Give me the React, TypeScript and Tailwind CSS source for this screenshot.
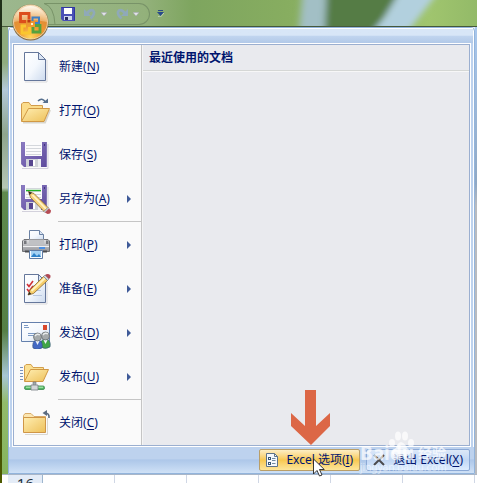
import type { ReactNode } from "react";

type MenuEntry = {
  label: string;
  accessKey: string;
  icon: ReactNode;
  submenu?: boolean;
  divider?: boolean;
};

function Icon({ children }: { children: ReactNode }) {
  return (
    <svg viewBox="0 0 32 32" className="size-8 shrink-0" aria-hidden="true">
      {children}
    </svg>
  );
}

function Gradients() {
  return (
    <svg className="absolute size-0" aria-hidden="true">
      <defs>
        <linearGradient id="paper" x1="0" y1="0" x2="1" y2="1">
          <stop offset="0" stopColor="#ffffff" />
          <stop offset="0.5" stopColor="#f4f8fd" />
          <stop offset="1" stopColor="#ccdaee" />
        </linearGradient>
        <linearGradient id="folder" x1="0" y1="0" x2="1" y2="1">
          <stop offset="0" stopColor="#ffeeb2" />
          <stop offset="1" stopColor="#edc059" />
        </linearGradient>
        <linearGradient id="disk" x1="0" y1="0" x2="1" y2="1">
          <stop offset="0" stopColor="#8c7cc4" />
          <stop offset="1" stopColor="#5d4a9c" />
        </linearGradient>
        <linearGradient id="metal" x1="0" y1="0" x2="0" y2="1">
          <stop offset="0" stopColor="#e0e0e2" />
          <stop offset="1" stopColor="#94959a" />
        </linearGradient>
        <radialGradient id="orb" cx="0.5" cy="0.95" r="0.95">
          <stop offset="0" stopColor="#ffd75c" />
          <stop offset="0.35" stopColor="#ef9a30" />
          <stop offset="0.65" stopColor="#e28e35" />
          <stop offset="1" stopColor="#f6dcb6" />
        </radialGradient>
        <linearGradient id="gloss" x1="0" y1="0" x2="0" y2="1">
          <stop offset="0" stopColor="#fffaf0" stopOpacity="0.95" />
          <stop offset="1" stopColor="#f6cf9a" stopOpacity="0.45" />
        </linearGradient>
      </defs>
    </svg>
  );
}

function Page() {
  return (
    <>
      <path d="M5 31H27V9" fill="none" stroke="#d9d9dc" />
      <path d="M4.5 1.5H18.5L25.5 8.5V29.5H4.5Z" fill="url(#paper)" stroke="#65779b" />
      <path d="M18.5 1.5V8.5H25.5Z" fill="#dce6f4" stroke="#65779b" />
    </>
  );
}

function Disk() {
  return (
    <>
      <path d="M2 29.5H28V5" fill="none" stroke="#d3d1dc" />
      <path d="M1 3H27V28H4L1 25Z" fill="url(#disk)" />
      <path d="M1.5 3V25M26.5 3V28" stroke="#8275b5" fill="none" />
      <path d="M5 3H22V17H5Z" fill="#fbfbfc" />
      <path d="M6 6.5H21M6 9.5H21M6 12.5H21M6 15.5H21" stroke="#d4d7dc" />
      <path d="M24 5h1v2h-1z" fill="#3f3280" />
      <path d="M6 20H21V28H6Z" fill="#cfd2d8" />
      <path d="M9 21H13V27H9Z" fill="#574690" />
      <path d="M13 21H15V27H13Z" fill="#fff" />
      <path d="M18 20H21V28H18Z" fill="#eceef2" />
    </>
  );
}

function Person({ body }: { body: string }) {
  return (
    <>
      <path d="M-4 13C-5 8-3 5 0 5C4 5 6 8 5 13Q0 16-4 13Z" fill={body} stroke="#35547d" strokeWidth="0.6" />
      <path d="M-1.5 6L0.5 10L2.5 6Z" fill="#eef4fa" />
      <circle cx="0.5" cy="2" r="4" fill="#a4a9ab" stroke="#6a7174" strokeWidth="0.8" />
      <path d="M-2 1Q0-2 3 0" stroke="#e8ebec" strokeWidth="1.5" fill="none" />
    </>
  );
}

const newIcon = (
  <Icon>
    <Page />
  </Icon>
);

const openIcon = (
  <Icon>
    <path d="M3 27.5H25L30 15" fill="none" stroke="#d8d5cc" strokeWidth="2" />
    <path d="M1.5 26V9L3 7.5H9L11 10.5H22.5V15" fill="#fbdc8b" stroke="#d19b4b" />
    <path d="M1.5 26.5L8.5 13.5H29.5L24 26.5Z" fill="url(#folder)" stroke="#d19843" />
    <path d="M18 6Q22 2 25.5 7" fill="none" stroke="#566f8d" strokeWidth="1.6" />
    <path d="M22.5 8H28V3.5Z" fill="#566f8d" />
  </Icon>
);

const saveIcon = (
  <Icon>
    <Disk />
  </Icon>
);

const saveAsIcon = (
  <Icon>
    <g transform="translate(0 -1)">
      <Disk />
    </g>
    <path d="M6 7.5H21" stroke="#1fb026" strokeWidth="1.4" />
    <path d="M8.500 8.500L10.500 14.500L24 28.500L28 24.500L14 10.500Z" fill="#f7d37c" stroke="#8a6834" strokeWidth="0.8" />
    <path d="M12.500 12L26 26" stroke="#fff3c8" strokeWidth="1.8" />
    <path d="M8.500 8.500L9.700 12L12 9.800Z" fill="#2d2821" />
    <path d="M24 28.500L28 24.500L29 25.500L25 29.500Z" fill="#dfe3e6" stroke="#747b82" strokeWidth="0.6" />
    <path d="M25 29.500L29 25.500L31 27.500Q31 31 27.500 31Z" fill="#b54c54" />
  </Icon>
);

const printIcon = (
  <Icon>
    <path d="M9.5 11V1.5H19.5L23.5 5.5V11Z" fill="url(#paper)" stroke="#6b81a3" />
    <path d="M19.5 1.5V5.5H23.5" fill="#dce6f4" stroke="#6b81a3" />
    <path d="M4 10.5H28L29.5 12V22.5H2.5V12Z" fill="url(#metal)" stroke="#717276" />
    <path d="M4 11.5H6.5V15H4ZM26 11.5H28.5V15H26Z" fill="#77787d" />
    <path d="M9 10.5H24V16H9Z" fill="#c0c1c4" />
    <path d="M3 17.5H29" stroke="#efeff0" />
    <path d="M19 18H25V20H19Z" fill="#4b8fe3" />
    <path d="M9.5 21.5H22.5V29.5H9.5Z" fill="#f6faff" stroke="#5f7ba3" />
    <path d="M11 22H21V28H11Z" fill="#a4d1f3" />
    <path d="M11 28L14 24L17 27L19 25L21 28Z" fill="#2e82c9" />
    <path d="M5 22.5H9M23 22.5H27" stroke="#4b4c50" strokeWidth="2" />
  </Icon>
);

const prepareIcon = (
  <Icon>
    <Page />
    <path d="M13 12.5H21M13 17.5H21M13 22.5H22" stroke="#b9c8df" />
    <path d="M7 11L9 13.5L13 8M7 16L9 18.5L13 13" stroke="#cf3138" strokeWidth="1.6" fill="none" />
    <path d="M8 22L10 17L23.500 3.500L27.500 7.500L13.500 20.500Z" fill="#f6ce6b" stroke="#8a6830" strokeWidth="0.8" />
    <path d="M11.500 18L25 5" stroke="#fff2c0" strokeWidth="1.8" />
    <path d="M8 22L9.300 18.800L11.200 21Z" fill="#2d2821" />
    <path d="M23.500 3.500L25 2L29 6L27.500 7.500Z" fill="#cfd6dc" stroke="#6d7680" strokeWidth="0.6" />
    <path d="M25 2Q28 0 30.500 2.500Q31 4.500 29 6Z" fill="#b04a55" />
  </Icon>
);

const sendIcon = (
  <Icon>
    <path d="M1.500 5.500H29.500V24.500H1.500Z" fill="url(#paper)" stroke="#6480ad" />
    <path d="M4 8.500H8M4 10.500H9M8 16.500H16M8 18.500H14" stroke="#7c9ac5" />
    <path d="M23 8H27V13H23Z" fill="#d9472b" />
    <g transform="translate(25 17)">
      <Person body="#40a546" />
    </g>
    <g transform="translate(17 18)">
      <Person body="#4469c3" />
    </g>
  </Icon>
);

const publishIcon = (
  <Icon>
    <path d="M0 6.500H3M0 9.500H3M0 12.500H3M0 15.500H3M0 18.500H3" stroke="#7892bd" />
    <path d="M4.500 20V5L6 3.500H11L13 6.500H23.500V10" fill="#fbe092" stroke="#d3a04e" />
    <path d="M4.500 20.500L10.500 8.500H28.500L23 20.500Z" fill="url(#folder)" stroke="#d19843" />
    <path d="M13 21H16V25H13Z" fill="#a4a9ad" stroke="#70767c" strokeWidth="0.6" />
    <rect x="4.500" y="25" width="20" height="3.500" rx="1.500" fill="#55b963" stroke="#38864a" strokeWidth="0.8" />
    <path d="M6 26.200H23" stroke="#b9efbe" />
    <path d="M11 24H18V29H11Z" fill="#d3d6d9" stroke="#777e84" strokeWidth="0.8" />
  </Icon>
);

const closeIcon = (
  <Icon>
    <path d="M5 27.500H27.500V11" fill="none" stroke="#dad8d2" />
    <path d="M3.500 25V8.500L5 6.500H11L14 9.500H25.500V12" fill="#fbe6b0" stroke="#d9ab6a" />
    <path d="M3.500 10.500H25.500V25.500H3.500Z" fill="url(#folder)" stroke="#cf9647" />
    <path d="M29 11Q29.500 6 25 6" fill="none" stroke="#5a6b80" strokeWidth="1.600" />
    <path d="M22.500 6L27 3V9Z" fill="#5a6b80" />
  </Icon>
);

const entries: MenuEntry[] = [
  { label: "新建", accessKey: "N", icon: newIcon },
  { label: "打开", accessKey: "O", icon: openIcon },
  { label: "保存", accessKey: "S", icon: saveIcon },
  { label: "另存为", accessKey: "A", icon: saveAsIcon, submenu: true, divider: true },
  { label: "打印", accessKey: "P", icon: printIcon, submenu: true },
  { label: "准备", accessKey: "E", icon: prepareIcon, submenu: true },
  { label: "发送", accessKey: "D", icon: sendIcon, submenu: true },
  { label: "发布", accessKey: "U", icon: publishIcon, submenu: true, divider: true },
  { label: "关闭", accessKey: "C", icon: closeIcon },
];

function Label({ text, accessKey }: { text: string; accessKey: string }) {
  return (
    <span className="whitespace-nowrap">
      {text}(<u className="underline-offset-2">{accessKey}</u>)
    </span>
  );
}

function Wallpaper() {
  return (
    <svg
      viewBox="0 0 477 27"
      preserveAspectRatio="none"
      className="absolute inset-0 h-full w-full"
      aria-hidden="true"
    >
      <defs>
        <linearGradient id="grass">
          <stop offset="0" stopColor="#9cb78e" />
          <stop offset="0.3" stopColor="#93b17b" />
          <stop offset="0.4" stopColor="#7ea55f" />
          <stop offset="0.6" stopColor="#87ad60" />
          <stop offset="0.9" stopColor="#a0c56e" />
          <stop offset="1" stopColor="#93ba68" />
        </linearGradient>
        <filter id="soft">
          <feGaussianBlur stdDeviation="4 2" />
        </filter>
      </defs>
      <rect width="477" height="27" fill="url(#grass)" />
      <g filter="url(#soft)">
        <path d="M302 -8H326V35H298Z" fill="#a2bfc5" />
        <path d="M326 -8H401L372 35H324Z" fill="#557c45" />
        <path d="M399 -8H438L406 35H370L384 18Z" fill="#b2d0de" />
      </g>
    </svg>
  );
}

function OfficeButton() {
  return (
    <button type="button" aria-label="Office" className="absolute top-1 left-2.5 z-20 size-[37px]">
      <svg viewBox="0 0 37 37" className="size-full">
        <circle cx="18.500" cy="18.500" r="18" fill="#8a6c3f" />
        <circle cx="18.500" cy="18" r="17" fill="url(#orb)" stroke="#f7e2bd" strokeWidth="0.800" />
        <path d="M2 18A16.500 16 0 0 1 35 18Q18 14 2 18Z" fill="url(#gloss)" />
        <g fill="none" strokeWidth="2.800">
          <path d="M14 17.500H8.500V9.500H17V15" stroke="#dc4e1b" />
          <path d="M20.500 17V13.500H27V19H23" stroke="#3f7fc4" strokeWidth="2" />
          <path d="M17.500 23V29H10V22H14" stroke="#fac62e" />
          <path d="M21 23V28H28V21.500H23" stroke="#56a23d" />
        </g>
        <path d="M15.500 15.500H18.500V18.500H15.500Z" fill="#b93a14" />
        <path d="M19 19H21V21H19Z" fill="#fff2cb" />
      </svg>
    </button>
  );
}

function UndoGlyph() {
  return (
    <svg viewBox="0 0 14 14" className="size-[14px]" aria-hidden="true">
      <path d="M4 6.500Q7 2 10 3.500Q13 6.500 7.500 11.500" fill="none" stroke="#8fa9b8" strokeWidth="2.600" />
      <path d="M1 2V9H8Z" fill="#8fa9b8" />
    </svg>
  );
}

function SmallCaret() {
  return (
    <svg viewBox="0 0 6 4" className="h-1 w-1.5" aria-hidden="true">
      <path d="M0 0.500H6L3 4Z" fill="#e3e4e8" stroke="#a5a5b4" strokeWidth="0.500" />
    </svg>
  );
}

function TitleBar() {
  return (
    <header className="relative h-[27px] shrink-0 border-b border-[#45583a]">
      <Wallpaper />
      <OfficeButton />
      <div className="relative flex items-start gap-[7px] pt-[3px] pl-[42px]">
        <div className="flex h-[22px] items-center gap-1 rounded-r-full border border-l-0 border-[#789368] pr-[10px]">
          {/* left end of the toolbar bends round the Office button */}
          <svg viewBox="0 0 12 22" className="h-[22px] w-3" aria-hidden="true">
            <path d="M0 0.500Q10 3 11 21.500" fill="none" stroke="#789368" />
          </svg>
          <button type="button" aria-label="保存" className="ml-px">
            <svg viewBox="0 0 14 14" className="size-[14px]">
              <path d="M0 0H14V14H2L0 12Z" fill="#4a50b6" />
              <path d="M3 1H11V7H3Z" fill="#fff" />
              <path d="M3 9H11V13H3Z" fill="#cdd6ee" />
              <path d="M4 10H7V13H4Z" fill="#282b63" />
              <path d="M0.500 0.500H13.500V13.500" fill="none" stroke="#3036a0" />
            </svg>
          </button>
          <button type="button" aria-label="撤消" className="ml-1 flex items-center gap-1">
            <UndoGlyph />
            <SmallCaret />
          </button>
          <button type="button" aria-label="恢复" className="ml-1 flex items-center gap-1">
            <span className="-scale-x-100">
              <UndoGlyph />
            </span>
            <SmallCaret />
          </button>
        </div>
        <button type="button" aria-label="自定义快速访问工具栏" className="mt-[7px]">
          <svg viewBox="0 0 7 7" className="size-[7px]">
            <path d="M1 0.500H6" stroke="#2c4b86" />
            <path d="M0 2H7L3.500 6Z" fill="#274a8c" />
            <path d="M1 6.500L3.500 7L7 3" stroke="#e6eedd" strokeWidth="0.600" fill="none" />
          </svg>
        </button>
      </div>
    </header>
  );
}

function MenuItem({ entry }: { entry: MenuEntry }) {
  return (
    <li>
      <button type="button" className="flex h-11 w-full items-center gap-[7px] pr-[10px] pl-1.5 text-left">
        {entry.icon}
        <Label text={entry.label} accessKey={entry.accessKey} />
        {entry.submenu && (
          <svg viewBox="0 0 4 8" className="ml-auto h-2 w-1" aria-hidden="true">
            <path d="M0 0L4 4L0 8Z" fill="#3f5a98" />
          </svg>
        )}
      </button>
      {entry.divider && <div className="ml-11 h-0.5 border-t border-[#c5c5c5]" />}
    </li>
  );
}

function Watermark() {
  return (
    <div className="pointer-events-none absolute right-[26px] bottom-0 z-10 w-[86px] text-white/70" aria-hidden="true">
      <div className="relative flex items-end justify-between leading-4">
        <span className="text-[19px] font-bold">Baidu</span>
        <svg viewBox="0 0 26 26" className="absolute bottom-1 left-7 size-[26px]" fill="currentColor">
          <ellipse cx="4" cy="12" rx="3" ry="4" />
          <ellipse cx="10" cy="5" rx="3" ry="4.500" />
          <ellipse cx="17" cy="5" rx="3" ry="4.500" />
          <ellipse cx="23" cy="12" rx="3" ry="4" />
          <path d="M13 11Q17 12 19 17Q24 20 21 24Q18 27 13 25Q8 27 5 24Q2 20 8 17Q9 12 13 11Z" />
        </svg>
        <span className="text-[14px] font-bold whitespace-nowrap">经验</span>
      </div>
      <div className="text-[10px] leading-3 text-white/50">jingyan.baidu.com</div>
    </div>
  );
}

function MenuFooter() {
  return (
    <footer className="relative flex justify-end gap-1.5 py-0.5 pr-0.5">
      <div className="relative">
        <button
          type="button"
          className="flex h-[22px] items-center gap-2 rounded-[2px] border border-[#b99e68] bg-linear-to-b from-[#fdeec4] via-[#f8c84e] via-50% to-[#fde69a] px-1.5"
        >
          <svg viewBox="0 0 12 14" className="h-[14px] w-3" aria-hidden="true">
            <path d="M0.500 0.500H8.500L11.500 3.500V13.500H0.500Z" fill="#f4f8fc" stroke="#5d7389" />
            <path d="M8.500 0.500V3.500H11.500" fill="none" stroke="#5d7389" />
            <path d="M2 4H5V7H2ZM2 9H5V12H2Z" fill="#395775" />
            <path d="M3 5H4V6H3ZM3 10H4V11H3Z" fill="#fff" />
            <path d="M6 5.500H9.500M6 7.500H9.500M6 10.500H9.500" stroke="#708aa2" />
          </svg>
          <Label text="Excel 选项" accessKey="I" />
        </button>
        {/* callout arrow */}
        <svg
          viewBox="0 0 39 55"
          className="pointer-events-none absolute bottom-full left-8 mb-1 h-[55px] w-[39px]"
          aria-hidden="true"
        >
          <path d="M14 0H25V36L39 23V36L20 55L0 36V23L14 36Z" fill="#dc6746" />
        </svg>
        {/* mouse pointer */}
        <svg
          viewBox="0 0 12 19"
          className="pointer-events-none absolute top-[9px] left-[54px] z-20 h-[19px] w-3"
          aria-hidden="true"
        >
          <path
            d="M0.500 1V16L4 12.500L6.500 18L9 17L6.500 11.500H11.300Z"
            fill="#fff"
            stroke="#222"
            strokeWidth="0.900"
          />
        </svg>
      </div>
      <button
        type="button"
        className="flex h-[22px] items-center gap-2 rounded-[2px] border border-[#8ba9d6] bg-linear-to-b from-[#dce8f8] via-[#c2d7f4] via-50% to-[#dcecff] px-1.5"
      >
        <svg viewBox="0 0 12 12" className="size-3" aria-hidden="true">
          <path d="M1 1L11 11M11 1L1 11" stroke="#4b4b4f" strokeWidth="2" />
        </svg>
        <Label text="退出 Excel" accessKey="X" />
      </button>
      <Watermark />
    </footer>
  );
}

export default function App() {
  return (
    <div className="flex h-screen overflow-hidden bg-[#e6ecf5] font-['Noto_Sans','Noto_Sans_CJK_SC',sans-serif] text-[12px] leading-4 text-[#00156e]">
      <Gradients />
      <div className="w-0.5 shrink-0 bg-linear-to-b from-[#20301a] via-[#101a04] to-[#4d5a00]" />
      <div className="relative flex min-w-0 flex-1 flex-col">
        <TitleBar />
        <div className="flex">
          <div className="w-1.5 shrink-0 bg-[linear-gradient(to_bottom,#8fac7e_8%,#b3c9d8_14%,#8ea58c_24%,#b5c6b4_36%,#5f8a4e_37%,#557f45_68%,#a7c6d4_78%,#92bb6a_84%,#86b45e)]" />
          <main className="min-w-0 flex-1 rounded-t border border-[#92b4dc] bg-[#bdd2ee] shadow-[inset_1px_1px_0_#fff,inset_-1px_0_0_#fff]">
            <div className="mx-px h-[15px] border-t border-white bg-linear-to-b from-[#d8e6f7] from-45% via-[#c1d5ef] via-50% to-[#b2c9e8]" />
            <div className="mx-[3px] border border-white">
              <div className="flex border border-[#9bafd0]">
                <nav className="w-[128px] shrink-0 border-r border-[#c5c5c5] bg-[#fafafa]">
                  <ul>
                    {entries.map((entry) => (
                      <MenuItem key={entry.accessKey} entry={entry} />
                    ))}
                  </ul>
                </nav>
                <section className="flex-1 border-l border-[#f5f5f5] bg-[#e9eaee]">
                  <h2 className="border-b border-[#d5d7d5] px-1.5 pt-[5px] pb-1 font-bold shadow-[0_1px_0_#f7f7f7]">
                    最近使用的文档
                  </h2>
                </section>
              </div>
            </div>
            <div className="bg-linear-to-b from-[#bdd2ee] from-45% via-[#adc7e9] via-50% to-[#cfe1f6] px-0.5">
              <MenuFooter />
            </div>
          </main>
          <div className="w-0.5 shrink-0 bg-linear-to-b from-[#aac8ed] via-[#8fa8c4] via-35% to-[#b9bbbf] to-40%" />
        </div>
        <div className="flex flex-1 items-start overflow-hidden border-t border-[#a9b6c8] bg-white pl-1.5">
          <span className="w-[35px] shrink-0 border-r border-[#9eb6ce] bg-[#e4ecf7] pr-2 text-right text-[15px] leading-4 text-[#27323f]">
            16
          </span>
          <div className="flex h-5 flex-1">
            {["A", "B", "C", "D", "E", "F"].map((col) => (
              <span key={col} className="w-[72px] shrink-0 border-r border-[#d0d7e5]" />
            ))}
          </div>
        </div>
      </div>
    </div>
  );
}
